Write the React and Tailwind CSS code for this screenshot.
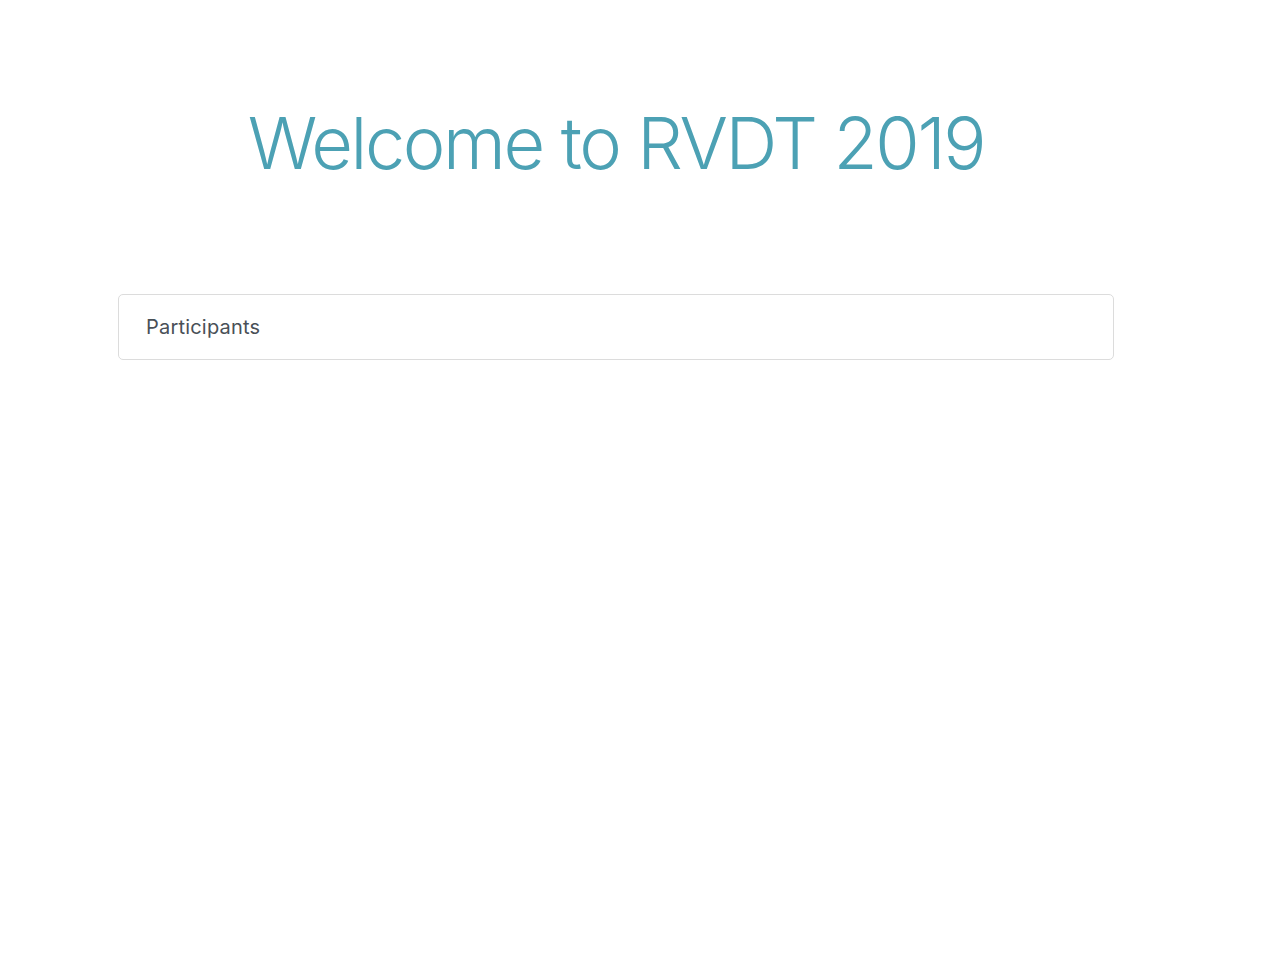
export default function App() {
  return (
    <div className="min-h-screen bg-white" style={{ fontFamily: "Inter, 'Liberation Sans', sans-serif" }}>
      <div className="w-[996px] ml-[118px]">
        {/* Heading */}
        <div className="pt-[100px] flex justify-center">
          <h1 className="text-[72px] leading-[86px] font-light text-[#4ca1b4] tracking-[-2.4px] whitespace-nowrap">
            Welcome to RVDT 2019
          </h1>
        </div>

        {/* Participants card */}
        <div className="mt-[108px] border border-[#dcdcdc] rounded-[5px] h-[66px] flex items-center px-[27px]">
          <span className="text-[20px] text-[#495057] tracking-[0.2px]">Participants</span>
        </div>
      </div>
    </div>
  );
}
